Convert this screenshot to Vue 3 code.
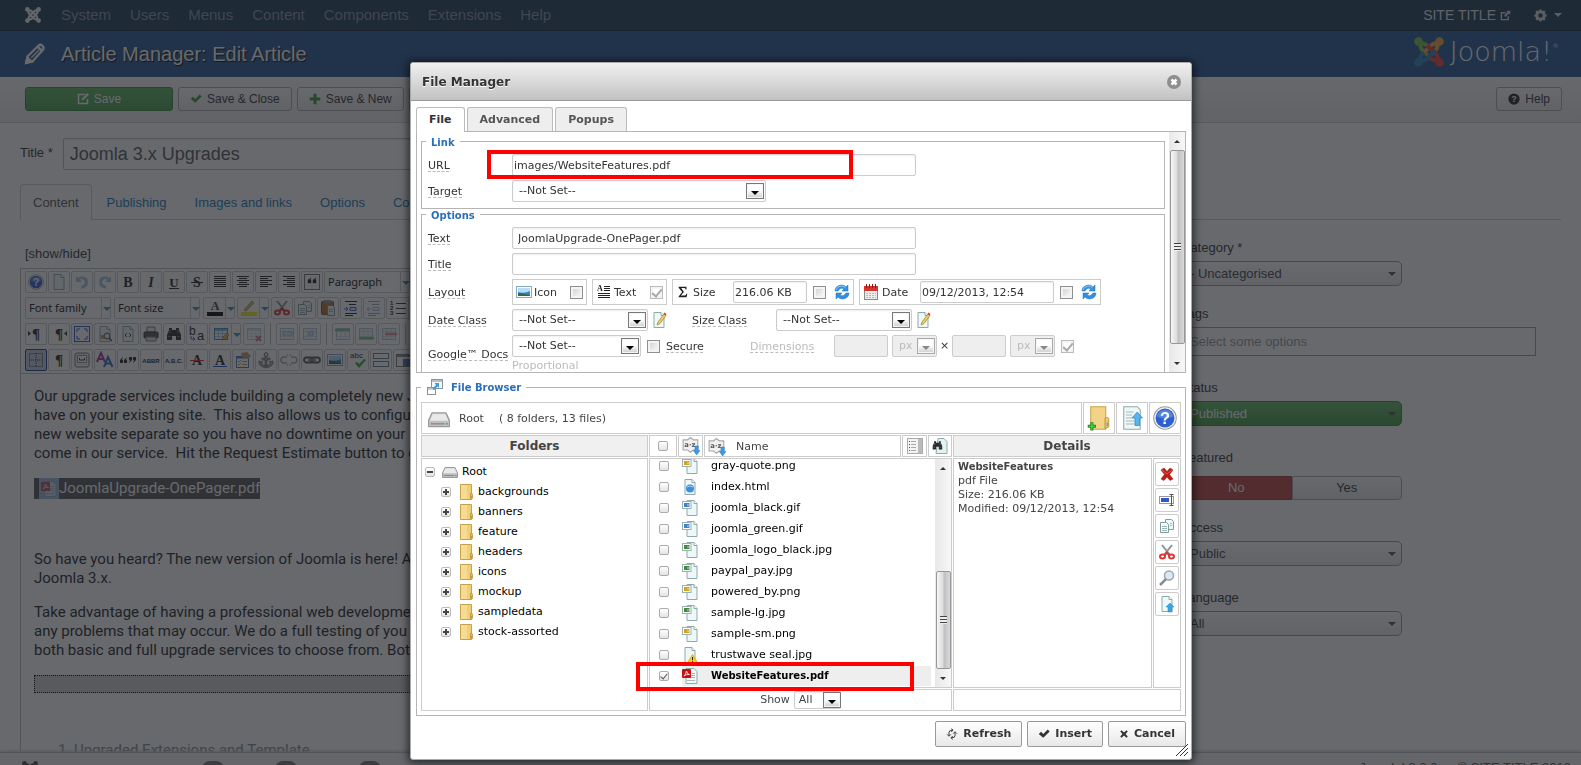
<script setup>
import { h, ref } from 'vue'

const doc = '<path d="M3 .5h7l3 3v12H3z" fill="#eef8f8" stroke="#8fa9ab"/><path d="M10 .5v3h3" fill="#fff" stroke="#8fa9ab"/>'
const picture = (c) =>
  '<path d="M5 .5h7l3 3v12H5z" fill="#eef8f8" stroke="#8fa9ab"/><path d="M12 .5v3h3" fill="#fff" stroke="#8fa9ab"/>' +
  `<rect x=".5" y="1.500" width="8.500" height="7" fill="#fff" stroke="#9ab0b3"/><rect x="2" y="3" width="5.500" height="4" fill="${c}"/><path d="M5 4h2.500v2H5z" fill="#fff" opacity=".35"/>`
const lines = (arr) => arr.map(([x, w], i) => `<path d="M${x} ${2.5 + i * 2}h${w}" stroke="#222"/>`).join('')
const tableBase =
  '<rect x="1.500" y="2.500" width="13" height="11" fill="#fff" stroke="#4d86a8"/><path d="M2 4h12" stroke="#7dbce0" stroke-width="2"/><path d="M2 7.500h12M2 10.500h12M5.500 5v8M9.500 5v8" stroke="#a9cfe2"/>'
const paleTable =
  '<rect x="1.500" y="2.500" width="13" height="11" fill="#f4f8fa" stroke="#b5c8d2"/><path d="M2 5.500h12M2 10.500h12M6 3v10M10 3v10" stroke="#d3e0e6"/>'
const joomla = (...colors) =>
  colors
    .map(
      (c, i) =>
        `<g transform="rotate(${i * 90} 8 8)"><path d="M3.500 3Q3 5.500 4.500 7L9 11.500M3 3.500Q5.500 3 7 4.500L7.800 5.300" fill="none" stroke="${c}" stroke-width="2.200"/><circle cx="2.400" cy="2.400" r="2.300" fill="${c}"/></g>`
    )
    .join('')
const scissors =
  '<path d="M3 1l8 10M13 1L5 11" stroke="#8c9498" stroke-width="2"/><g fill="none" stroke="#d83a3a" stroke-width="2"><ellipse cx="3.500" cy="12.500" rx="2.500" ry="2"/><ellipse cx="12.500" cy="12.500" rx="2.500" ry="2"/><path d="M5.500 11.500L8 8.500l2.500 3"/></g>'
const copy =
  '<path d="M6.500 1.500h6l2 2v8h-8z" fill="#eef8f8" stroke="#7f9c9f"/><path d="M1.500 4.500h6l2 2v8h-8z" fill="#f5fbfb" stroke="#7f9c9f"/><path d="M3 8.500h5M3 10.500h5M3 12.500h5M11 5.500h2M11 7.500h2" stroke="#9fb6b8"/>'
const binoc =
  '<path d="M3 2h3v2h4V2h3v2l2 5v5h-5v-4H6v4H1V9l2-5z" fill="#2a2a2a"/><path d="M2.500 10.500h2M11.500 10.500h2M4 4v3M12 4v3" stroke="#888"/>'
const glyph = (t, size = 13, extra = '') =>
  `<text x="8" y="13" text-anchor="middle" font-family="Liberation Serif, serif" font-weight="bold" font-size="${size}" fill="#222" ${extra}>${t}</text>`
const arrowUp = '<path d="M11 7l4 4h-2v5H9v-5H7z" fill="#3aa5e4" stroke="#2b86c4" stroke-width=".5"/>'

const icons = {
  joomla: joomla('#f2f2f2', '#f2f2f2', '#f2f2f2', '#f2f2f2'),
  joomlaColor: joomla('#7cc242', '#f9a541', '#ee4035', '#2c86bd'),
  pencil: '<path d="M1 15l1-5L11 1q1.500-1 3 .5t.5 3L6 14z" fill="none" stroke="#fff" stroke-width="1.800"/><path d="M1 15l1-4 3 3zM10 2l4 4" fill="#fff" stroke="#fff" stroke-width="2"/><path d="M5 11l6-6" stroke="#fff"/>',
  edit: '<path d="M11 2H2v12h12V8" fill="none" stroke="currentColor" stroke-width="2"/><path d="M6 10l1-3 7-7 2 2-7 7z" fill="currentColor"/>',
  check: '<path d="M1 8l3-3 3 3 6-6 2.500 2.500L7 13z" fill="currentColor"/>',
  plus: '<path d="M6 1h4v5h5v4h-5v5H6v-5H1V6h5z" fill="currentColor"/>',
  external: '<path d="M8 4H2v10h10V9" fill="none" stroke="#ddd" stroke-width="2"/><path d="M9 1h6v6l-2-2-5 5-2-2 5-5z" fill="#ddd"/>',
  gear: '<circle cx="8" cy="8" r="4.500" fill="none" stroke="#ddd" stroke-width="3.500"/><path d="M8 .5v3M8 12.500v3M.5 8h3M12.500 8h3M2.700 2.700l2 2M11.300 11.300l2 2M13.300 2.700l-2 2M4.700 11.300l-2 2" stroke="#ddd" stroke-width="3"/>',
  question: '<circle cx="8" cy="8" r="7.500" fill="#222"/><text x="8" y="12" text-anchor="middle" font-family="Liberation Sans, sans-serif" font-weight="bold" font-size="12" fill="#fff">?</text>',
  help: '<circle cx="8" cy="8" r="7.500" fill="#f4f4f4" stroke="#999" stroke-width=".7"/><circle cx="8" cy="8" r="6.300" fill="#2c5fd0"/><path d="M2.500 7a5.600 5.600 0 0 1 11 0q-5 2.500-11 0z" fill="#6f9bee" opacity=".6"/><text x="8" y="12" text-anchor="middle" font-family="Liberation Sans, sans-serif" font-weight="bold" font-size="11" fill="#fff">?</text>',
  doc,
  undo: '<path d="M2 2v6h6L5.500 5.500Q9 4 10.500 7T7 12v2.500q7-.5 7-6T9 2.500Q6 2 4 4z" fill="#a6c8e0"/>',
  redo: '<path d="M14 2v6H8l2.500-2.500Q7 4 5.500 7T9 12v2.500q-7-.5-7-6T7 2.500q3-.5 5 1.500z" fill="#a6c8e0"/>',
  bold: glyph('B', 14),
  italic: glyph('I', 14, 'font-style="italic"'),
  underline: glyph('U', 13) + '<path d="M3 14.500h10" stroke="#222"/>',
  strike: glyph('S', 14) + '<path d="M2 8.500h12" stroke="#222"/>',
  justify: lines([[2, 12], [2, 12], [2, 12], [2, 12], [2, 12], [2, 12]]),
  center: lines([[2, 12], [4, 8], [2, 12], [4, 8], [2, 12], [4, 8]]),
  left: lines([[2, 12], [2, 8], [2, 12], [2, 8], [2, 12], [2, 8]]),
  right: lines([[2, 12], [6, 8], [2, 12], [6, 8], [2, 12], [6, 8]]),
  quote: '<rect x=".5" y=".5" width="15" height="15" fill="#fff" stroke="#777"/><path d="M4 9V6l3-2-1 2h1v3zM9 9V6l3-2-1 2h1v3z" fill="#222" stroke="#222" stroke-width=".5"/>',
  fore: '<text x="8" y="10" text-anchor="middle" font-family="Liberation Serif, serif" font-weight="bold" font-size="12" fill="#333">A</text><path d="M0 12h16v4H0z" fill="#000"/>',
  hilite: '<path d="M3 10l8-9 2 2-8 8z" fill="#d7c24b" stroke="#666" stroke-width=".6"/><path d="M0 12h16v4H0z" fill="#eded10"/>',
  cut: scissors,
  copy,
  paste: '<rect x="1.500" y="1.500" width="12" height="13" rx="1" fill="#b5702c" stroke="#80501f"/><rect x="4" y="0" width="7" height="3" fill="#999"/><path d="M7.500 5.500h5l2 2v8h-7z" fill="#eef8f8" stroke="#7f9c9f"/><path d="M9 9.500h4M9 11.500h4" stroke="#9fb6b8"/>',
  indent: '<path d="M2 1.500h12M6 4.500h7M2 13.500h12M2 15.500h8" stroke="#222"/><path d="M7 7.500h6v3H7z" fill="#dce8ff" stroke="#3660d6"/><path d="M1 9h4M3 7l2 2-2 2" stroke="#3660d6" fill="none"/>',
  outdent: '<g opacity=".4"><path d="M2 1.500h12M6 4.500h7M2 13.500h12M2 15.500h8" stroke="#222"/><path d="M7 7.500h6v3H7z" fill="#dce8ff" stroke="#3660d6"/><path d="M1 9h4M3 7L1 9l2 2" stroke="#3660d6" fill="none"/></g>',
  numlist: '<path d="M6 3.500h10M6 8.500h10M6 13.500h10" stroke="#333"/><g font-family="Liberation Sans, sans-serif" font-weight="bold" font-size="6" fill="#222"><text x="0" y="5">1</text><text x="0" y="10">2</text><text x="0" y="15">3</text></g>',
  ltr: glyph('¶', 15) + '<path d="M0 5l3 2.500L0 10z" fill="#333"/>',
  rtl: glyph('¶', 15) + '<path d="M16 5l-3 2.500L16 10z" fill="#333"/>',
  full: '<rect x=".5" y=".5" width="15" height="15" fill="#fff" stroke="#2c57c8"/><path d="M3 6V3h3M10 3h3v3M13 10v3h-3M6 13H3v-3" stroke="#2c57c8" fill="none"/>',
  preview: doc + '<path d="M4 9h5v4H4z" fill="#d79b28"/><circle cx="10" cy="10" r="3" fill="#dcecf5" stroke="#555"/><path d="M12 12l3 3" stroke="#555" stroke-width="1.500"/>',
  source: doc + '<path d="M7 7L5 9l2 2M9 7l2 2-2 2" stroke="#444" fill="none"/>',
  print: '<path d="M4 1h8v5H4z" fill="#eee" stroke="#777"/><rect x="1" y="6" width="14" height="6" rx="1" fill="#555" stroke="#333"/><path d="M3 11h10v4H3z" fill="#ddd" stroke="#777"/>',
  search: binoc,
  replace: '<text x="0" y="9" font-family="Liberation Sans, sans-serif" font-size="12" fill="#222">b</text><text x="8" y="14" font-family="Liberation Sans, sans-serif" font-size="13" fill="#222">a</text><path d="M2 10v3h4M4 11l2 2-2 2" stroke="#2f6fd0" fill="none"/>',
  table: tableBase + '<path d="M9 14l1-3 4-4 2 2-4 4z" fill="#e6b93c" stroke="#915f1a" stroke-width=".6"/>',
  tabledel: '<g opacity=".35">' + tableBase + '</g><path d="M10 10l5 5M15 10l-5 5" stroke="#dc7777" stroke-width="2"/>',
  rowp: paleTable + '<rect x="4" y="6" width="9" height="3" fill="#e9f1ff" stroke="#9ab2e4"/>',
  cellp: paleTable + '<rect x="7" y="6" width="4" height="3" fill="#e9f1ff" stroke="#9ab2e4"/>',
  rowbefore: paleTable + '<path d="M0 4h15" stroke="#7dc283" stroke-width="2.500"/>',
  rowafter: paleTable + '<path d="M1 12h15" stroke="#7dc283" stroke-width="2.500"/>',
  rowdel: paleTable + '<path d="M4 8h12" stroke="#dd9292" stroke-width="2.500"/>',
  grid: '<path d="M1.500 1.500h13v13h-13zM8 1v14M1 8h14" fill="none" stroke="#333" stroke-dasharray="1 1"/>',
  pilcrow: glyph('¶', 15),
  nbsp: '<rect x="1" y="1" width="14" height="14" rx="2" fill="#eee" stroke="#777"/><rect x="3.500" y="3.500" width="9" height="7" fill="#fff" stroke="#999"/><path d="M5.500 6v2h5V6" fill="none" stroke="#333"/>',
  styles: '<g fill="none" stroke-width="2"><path d="M0 10L4 1l4 9M1.500 7h5" stroke="#a034a8"/><path d="M7 15l4-10 4.500 10M8.500 11.500h6" stroke="#2d6cc0"/></g>',
  cite: '<path d="M0 11V8l3-3-1 3h1v3zM4 11V8l3-3-1 3h1v3zM9 5h3v3l-3 3 1-3H9zM13 5h3v3l-3 3 1-3h-1z" fill="#222"/>',
  abbr: '<text x="8" y="11" text-anchor="middle" font-family="Liberation Sans, sans-serif" font-weight="bold" font-size="6" fill="#222">ABBR</text>',
  acro: '<text x="8" y="11" text-anchor="middle" font-family="Liberation Sans, sans-serif" font-weight="bold" font-size="6" fill="#222">A.B.C.</text>',
  del: glyph('A', 14) + '<path d="M1 8.500h14" stroke="#d22"/>',
  ins: glyph('A', 14) + '<path d="M1 14.500h14" stroke="#2352cc"/>',
  attribs: '<rect x="1.500" y="4.500" width="12" height="11" fill="#fff" stroke="#3b7ec6"/><path d="M1 5.500h12" stroke="#3b7ec6" stroke-width="2"/><path d="M3 9l1 1 2-2M3 12l1 1 2-2M7 9.500h5M7 12.500h5" stroke="#dd9a2a" fill="none"/><path d="M6 1l6-1 4 4-3 3-6-2z" fill="#c79a63"/>',
  anchor: '<circle cx="8" cy="2.500" r="1.800" fill="none" stroke="#555"/><path d="M7 4v10h2V4M4 6h8v2H4zM1 9l4 1-1.500 1q1 2 4.500 3 3.500-1 4.500-3L11 10l4-1v3q-2 3-7 4-5-1-7-4z" fill="#aaa" stroke="#555" stroke-width=".6"/>',
  unlink: '<g fill="none" stroke="#aaa" stroke-width="1.500"><path d="M6 5H3a3 3 0 0 0 0 6h3M10 5h3a3 3 0 0 1 0 6h-3"/><path d="M6 2l1 2M10 2L9 4M6 14l1-2M10 14l-1-2" stroke-width="1"/></g>',
  link: '<g fill="none" stroke="#555" stroke-width="1.800"><rect x="0" y="5.500" width="9" height="5" rx="2.500"/><rect x="7" y="5.500" width="9" height="5" rx="2.500"/><path d="M4 8h8" stroke="#888"/></g>',
  image: '<rect x=".5" y="2.500" width="15" height="11" fill="#fff" stroke="#86a9bd"/><path d="M2 4h12v8H2z" fill="#3787d6"/><path d="M2 4h12v3q-6 3-12 1z" fill="#b8dcf5"/><path d="M2 9q4 0 12 2v1H2z" fill="#316b48"/>',
  spell: '<text x="0" y="6" font-family="Liberation Sans, sans-serif" font-size="8" fill="#222">abc</text><path d="M5 11l2-1 2 2 5-5 2 1-7 8z" fill="#2fae36"/>',
  readmore: '<rect x=".5" y="1.500" width="15" height="5" fill="#fff" stroke="#5a7c90"/><rect x=".5" y="9.500" width="15" height="5" fill="#fff" stroke="#5a7c90"/>',
  pagebreak: '<rect x=".5" y="2.500" width="15" height="12" fill="#fff" stroke="#777"/><path d="M1 4h14" stroke="#888" stroke-width="2"/><path d="M7 7h8v7H7z" fill="#4a7fc6"/>',
  textIcon: '<text x="1" y="7" font-family="Liberation Serif, serif" font-weight="bold" font-size="8" fill="#222">A</text><path d="M8 2.500h6M8 4.500h6M8 6.500h6M2 9.500h12M2 11.500h12M2 13.500h12" stroke="#222"/>',
  sigma: '<path d="M3 2h9v3h-1q0-1.500-2-1.500H6L9 8l-3.500 4H10q1.500 0 2-2h1l-1 4H3v-1l4-5-4-5z" fill="#222"/>',
  refresh: '<path d="M1 7Q1 2 7 1q3-.3 5 2l2-2v6H8l2-2Q6 3 4 7zM15 9q0 5-6 6-3 .3-5-2l-2 2V9h6l-2 2q4 2 6-2z" fill="#2f8fe0" stroke="#2574bd" stroke-width=".5"/><path d="M2 6q1-3.500 5-4 3 0 4.500 2" stroke="#8cc8f4" fill="none"/>',
  calendar: '<rect x="1.500" y="2.500" width="13" height="13" fill="#eee" stroke="#888"/><path d="M1 2h14v5H1z" fill="#d8342c"/><path d="M3.500 0v4M6.500 0v4M9.500 0v4M12.500 0v4" stroke="#8c1c18"/><path d="M3 9.500h10M3 11.500h10M3 13.500h10" stroke="#a9bdbb" stroke-dasharray="2 1"/>',
  style: doc + '<path d="M6 13l1-3 6-8 2 1.500-6 8z" fill="#ecd24e" stroke="#8a6b22" stroke-width=".6"/><path d="M12.500 2l1-1.500 2 1.500-1 1.500z" fill="#d4433a"/>',
  browser: '<rect x="4.500" y=".5" width="11" height="9" fill="#f4f6f8" stroke="#8a9299"/><path d="M5 2h10" stroke="#b7bec4" stroke-width="2"/><rect x=".5" y="8.500" width="8" height="7" fill="#fff" stroke="#8a9299"/><path d="M1 10h7" stroke="#c8cdd1" stroke-width="2"/><path d="M12 4v5l-1.500-1.500L7 11l-1.500-1.500L9 6 7.500 4z" fill="#3f9be3"/>',
  drive: '<path d="M3 3.500h10l2.500 5.500v4.500H.5V9z" fill="#d5d5d5" stroke="#9a9a9a" stroke-linejoin="round"/><path d="M3.500 4.500h9L14.500 9h-13z" fill="#e9e9e9"/><path d="M1 9.500h14v3.500H1z" fill="#bdbdbd"/><path d="M2 11.500h10" stroke="#8c8c8c"/><path d="M13 11h1.500v1H13z" fill="#49b949"/>',
  folder: '<path d="M2.500.5h11v15h-11z" fill="#f1cf78" stroke="#c8a24a"/><path d="M3 1h6v14H3z" fill="#f7de98" opacity=".8"/><path d="M12.500 9.500q2-1 2 1v4l-2 1z" fill="#e6b957" stroke="#b58d38" stroke-width=".7"/><path d="M13.500 12v2" stroke="#58aee0"/>',
  newfolder: '<path d="M2.500.5h10v15h-10z" fill="#f3d486" stroke="#c8a24a" stroke-width=".7"/><path d="M12 8q2.500-1 2.500 1v5l-2.500 1z" fill="#f0c868" stroke="#b58d38" stroke-width=".6"/><path d="M13.500 11v2.500" stroke="#58aee0"/><path d="M.5 13.500h5.500M3.250 10.750v5.500" stroke="#1c8a1c" stroke-width="2"/><path d="M1 13.500h4.500M3.250 11.250v4.500" stroke="#4fd94f" stroke-width=".8"/>',
  upload: '<path d="M2.500.5h9l2 2v13h-11z" fill="#eef8f8" stroke="#8fa9ab" stroke-width=".7"/><path d="M4 4h5M4 6h4M4 8h4M4 10h6M4 12h6" stroke="#a5b8ba" stroke-width=".7"/><path d="M11.500 4l3.500 4h-2v5h-3V8H8z" fill="#56b6ee" stroke="#2b86c4" stroke-width=".5"/>',
  sort: '<path d="M1 2.500h4l2.500-2 2.500 2h4v9h-4l-2.500 2-2.500-2H1z" fill="#f1f1f1" stroke="#a8a8a8"/><text x="7" y="9" text-anchor="middle" font-family="DejaVu Sans, sans-serif" font-weight="bold" font-size="6" fill="#555">a·z</text><path d="M11.500 8h3v4H16l-3 4-3-4h1.500z" fill="#3b9be6" stroke="#2574bd" stroke-width=".4"/>',
  view: '<rect x=".5" y=".5" width="15" height="15" fill="#f3f3f3" stroke="#aaa"/><path d="M11 1h4v14h-4z" fill="#bbb"/><path d="M4 3.500h5M4 6.500h5M4 9.500h5M4 12.500h5" stroke="#aaa"/><path d="M2 3.500h1M2 6.500h1M2 9.500h1M2 12.500h1" stroke="#555"/>',
  find: '<path d="M6 .5h6l3 3v12H4z" fill="#e4f2f2" stroke="#8fa9ab"/><g transform="translate(0 2) scale(.68)">' + binoc + '</g>',
  png: picture('#d2a21a'),
  gif: picture('#3a84cc'),
  jpg: picture('#3f8a3c'),
  html: doc + '<circle cx="8" cy="9.500" r="4" fill="#3f8fdc"/><path d="M5 8q3-2 6 0" stroke="#a4d0f6" fill="none"/>',
  warn: doc + '<path d="M10.500 7.500l5 8h-10z" fill="#f5d21e" stroke="#c9a100" stroke-width=".7"/><path d="M10.500 10v3M10.500 13.800v1" stroke="#222"/>',
  pdf: '<path d="M4 .5h8l3 3v12H4z" fill="#eef8f8" stroke="#8fa9ab"/><path d="M7 7.500h6M7 9.500h6M10 5.500h3M5 12.500h8" stroke="#a5b8ba"/><rect x="0" y="1" width="9" height="9" rx="1" fill="#c90f0f"/><path d="M2 8q2-2 2.500-5Q5 6 7.500 6.500 4 6 2 8z" fill="none" stroke="#fff" stroke-width=".8"/>',
  remove: '<path d="M2 4l3-2 3 3.500L11 2l3 2-3.500 4.500L14 13l-3 1.500-3-3.500-3 3.500L2 13l3.500-4.500z" fill="#c41a12" stroke="#8f120c" stroke-width=".5"/><path d="M3 4l5 4 5-4" stroke="#ec6a60" fill="none" stroke-width=".8"/>',
  rename: '<rect x=".5" y="4.500" width="14" height="7" fill="#fff" stroke="#999"/><path d="M2 6h8v4H2z" fill="#2f55cf"/><path d="M10.500 2.500h4M10.500 13.500h4M12.500 3v10" stroke="#555"/>',
  zoom: '<circle cx="10" cy="5.500" r="4.500" fill="#dbe9f5" stroke="#9aa7b3" stroke-width="1.500"/><path d="M7 9l-6 6" stroke="#8c8c8c" stroke-width="2.500"/>',
  insert: doc + arrowUp,
  sync: '<path d="M4 10V6q0-3 4-3h1M7 1l2.500 2L7 5M12 6v4q0 3-4 3H7M9 11l-2.500 2L9 15M1.500 8.500L4 11l2.500-2.500M9.500 7.500L12 5l2.500 2.500" fill="none" stroke="#333" stroke-width="1.300"/>',
  cross: '<path d="M2 4l2-2 4 3.500L12 2l2 2-3.500 4L14 12l-2 2-4-3.500L4 14l-2-2 3.500-4z" fill="#333"/>',
  close: '<circle cx="8" cy="8" r="7" fill="#8e8e8e"/><path d="M5.500 5.500l5 5M10.500 5.500l-5 5" stroke="#fff" stroke-width="2.500"/>'
}

const Icon = (props) =>
  h('svg', { viewBox: '0 0 16 16', width: props.size || 16, height: props.size || 16, 'aria-hidden': 'true', innerHTML: icons[props.name] })
Icon.props = ['name', 'size']

const menus = ['System', 'Users', 'Menus', 'Content', 'Components', 'Extensions', 'Help']
const pageTabs = ['Content', 'Publishing', 'Images and links', 'Options', 'Configure Edit Screen']
const toolbar = [
  ['help', 'doc', 'undo', 'redo', 'bold', 'italic', 'underline', 'strike', 'justify', 'center', 'left', 'right', 'quote', '=Paragraph'],
  ['=Font family', '=Font size', '+fore', '+hilite', 'cut', 'copy', 'paste', 'indent', 'outdent', '+numlist'],
  ['ltr', 'rtl', 'full', 'preview', 'source', 'print', 'search', 'replace', '+table', 'tabledel', '|', 'rowp', 'cellp', '|', 'rowbefore', 'rowafter', 'rowdel', '|', 'rowp'],
  ['grid', 'pilcrow', 'nbsp', 'styles', 'cite', 'abbr', 'acro', 'del', 'ins', 'attribs', 'anchor', 'unlink', 'link', 'image', 'spell', 'readmore', 'pagebreak']
]
const folders = ['backgrounds', 'banners', 'feature', 'headers', 'icons', 'mockup', 'sampledata', 'stock-assorted']
const files = ref([
  ['gray-quote.png', 'png'], ['index.html', 'html'], ['joomla_black.gif', 'gif'], ['joomla_green.gif', 'gif'],
  ['joomla_logo_black.jpg', 'jpg'], ['paypal_pay.jpg', 'jpg'], ['powered_by.png', 'png'], ['sample-lg.jpg', 'jpg'],
  ['sample-sm.png', 'png'], ['trustwave seal.jpg', 'warn'], ['WebsiteFeatures.pdf', 'pdf']
].map(([name, icon]) => ({ name, icon, checked: icon === 'pdf' })))
const actions = [['remove', 'Delete'], ['rename', 'Rename'], ['copy', 'Copy'], ['cut', 'Cut'], ['zoom', 'View'], ['insert', 'Insert']]
</script>

<template>
  <div class="page">
    <nav class="nav">
      <Icon name="joomla" class="nav-logo" />
      <a v-for="m in menus" :key="m" href="#">{{ m }}</a>
      <span class="spacer"></span>
      <a href="#" class="site">SITE TITLE <Icon name="external" size="11" /></a>
      <button type="button" class="gear" aria-label="Settings"><Icon name="gear" size="13" /><i class="caret"></i></button>
    </nav>
    <header class="header">
      <Icon name="pencil" size="20" />
      <h1>Article Manager: Edit Article</h1>
      <div class="brand"><Icon name="joomlaColor" size="30" /><span>Joomla!</span><sup>®</sup></div>
    </header>
    <div class="subhead">
      <button type="button" class="btn save"><Icon name="edit" size="12" />Save</button>
      <button type="button" class="btn"><Icon name="check" size="12" class="green" />Save &amp; Close</button>
      <button type="button" class="btn"><Icon name="plus" size="12" class="green" />Save &amp; New</button>
      <button type="button" class="btn">Save as Copy</button>
      <span class="spacer"></span>
      <button type="button" class="btn"><Icon name="question" size="12" />Help</button>
    </div>

    <main class="content">
      <div class="title-row">
        <label for="title">Title *</label>
        <input id="title" type="text" value="Joomla 3.x Upgrades" />
      </div>
      <div class="page-tabs">
        <a v-for="(t, i) in pageTabs" :key="t" href="#" :class="{ on: i === 0 }">{{ t }}</a>
      </div>
      <div class="columns">
        <section class="main-col">
          <a href="#" class="showhide">[show/hide]</a>
          <div class="editor">
            <div class="toolbar">
              <div v-for="(row, r) in toolbar" :key="r" class="tb-row">
                <template v-for="(b, i) in row" :key="i">
                  <i v-if="b === '|'" class="sep"></i>
                  <button v-else-if="b[0] === '='" type="button" class="tb combo"><span>{{ b.slice(1) }}</span><i class="split"></i></button>
                  <button v-else-if="b[0] === '+'" type="button" class="tb wide" :aria-label="b.slice(1)"><Icon :name="b.slice(1)" /><i class="split"></i></button>
                  <button v-else type="button" class="tb" :class="{ active: b === 'grid' }" :aria-label="b"><Icon :name="b" /></button>
                </template>
              </div>
            </div>
            <div class="doc">
              <p>Our upgrade services include building a completely new Jo<br />have on your existing site.&nbsp; This also allows us to configur<br />new website separate so you have no downtime on your<br />come in our service.&nbsp; Hit the Request Estimate button to g</p>
              <p class="selected"><span class="pdf-mark"><Icon name="pdf" /></span>JoomlaUpgrade-OnePager.pdf</p>
              <p class="blank">&nbsp;</p>
              <p>So have you heard? The new version of Joomla is here! A<br />Joomla 3.x.</p>
              <p>Take advantage of having a professional web developmen<br />any problems that may occur. We do a full testing of you<br />both basic and full upgrade services to choose from. Both</p>
              <div class="dotted"></div>
              <ol><li>Upgraded Extensions and Template</li></ol>
            </div>
          </div>
        </section>
        <aside class="side">
          <div class="group tight"><label for="cat">Category *</label><div class="pick"><select id="cat"><option>- Uncategorised</option></select><i class="caret"></i></div></div>
          <div class="group"><label for="tags">Tags</label><input id="tags" type="text" placeholder="Select some options" /></div>
          <div class="group"><label for="status">Status</label><div class="pick pub"><select id="status"><option>Published</option></select><i class="caret"></i></div></div>
          <div class="group tight"><span class="lbl">Featured</span><div class="toggle"><button type="button" class="no">No</button><button type="button">Yes</button></div></div>
          <div class="group"><label for="access">Access</label><div class="pick"><select id="access"><option>Public</option></select><i class="caret"></i></div></div>
          <div class="group"><label for="lang">Language</label><div class="pick"><select id="lang"><option>All</option></select><i class="caret"></i></div></div>
        </aside>
      </div>
    </main>

    <footer class="status">
      <Icon name="joomla" class="dark" />
      <i class="pill"></i><i class="pill"></i><i class="pill last"></i>
      <span class="spacer"></span>
      <span>Joomla! 3.2.0 — © SITE TITLE 2013</span>
    </footer>
  </div>

  <div class="overlay">
    <section class="modal" role="dialog" aria-label="File Manager">
      <header class="modal-head">
        <h2>File Manager</h2>
        <button type="button" aria-label="Close"><Icon name="close" size="16" /></button>
      </header>
      <div class="modal-body">
        <div class="tabs" role="tablist">
          <button type="button" role="tab" class="on">File</button>
          <button type="button" role="tab">Advanced</button>
          <button type="button" role="tab">Popups</button>
        </div>
        <div class="panel">
          <div class="panel-main">
            <fieldset>
              <legend>Link</legend>
              <div class="row">
                <label for="url"><u>URL</u></label>
                <input id="url" type="text" class="long near" value="images/WebsiteFeatures.pdf" />
                <div class="mark url-mark"></div>
              </div>
              <div class="row">
                <label for="target"><u>Target</u></label>
                <div class="sel w254"><select id="target"><option>--Not Set--</option></select><i></i></div>
              </div>
            </fieldset>
            <fieldset class="second">
              <legend>Options</legend>
              <div class="row"><label for="text"><u>Text</u></label><input id="text" type="text" class="long" value="JoomlaUpgrade-OnePager.pdf" /></div>
              <div class="row"><label for="ttl"><u>Title</u></label><input id="ttl" type="text" class="long" value="" /></div>
              <div class="row">
                <span class="name"><u>Layout</u></span>
                <div class="boxes">
                  <div class="box w75"><Icon name="image" /><label for="l-icon">Icon</label><input id="l-icon" type="checkbox" class="end" /></div>
                  <div class="box w75"><Icon name="textIcon" /><label for="l-text">Text</label><input id="l-text" type="checkbox" class="end" checked disabled /></div>
                  <div class="box w182"><Icon name="sigma" size="14" /><label for="l-size">Size</label><input id="l-size" type="text" class="near size" value="216.06 KB" /><input type="checkbox" aria-label="Show size" /><button type="button" class="plain" aria-label="Refresh size"><Icon name="refresh" /></button></div>
                  <div class="box w242"><Icon name="calendar" /><label for="l-date">Date</label><input id="l-date" type="text" class="near date" value="09/12/2013, 12:54" /><input type="checkbox" aria-label="Show date" /><button type="button" class="plain" aria-label="Refresh date"><Icon name="refresh" /></button></div>
                </div>
              </div>
              <div class="row">
                <label for="dc"><u>Date Class</u></label>
                <div class="sel w136"><select id="dc"><option>--Not Set--</option></select><i></i></div>
                <button type="button" class="plain edit" aria-label="Edit date class"><Icon name="style" /></button>
                <label for="sc" class="second-label"><u>Size Class</u></label>
                <div class="sel w136"><select id="sc"><option>--Not Set--</option></select><i></i></div>
                <button type="button" class="plain edit" aria-label="Edit size class"><Icon name="style" /></button>
              </div>
              <div class="row docs">
                <label for="gd" class="low"><u>Google™ Docs</u></label>
                <div class="docs-fields">
                  <div class="line">
                    <div class="sel w129"><select id="gd"><option>--Not Set--</option></select><i></i></div>
                    <input id="sec" type="checkbox" /><label for="sec" class="secure"><u>Secure</u></label>
                    <label for="dw" class="dims"><u>Dimensions</u></label>
                    <input id="dw" type="text" class="dim" disabled />
                    <div class="sel off"><select disabled aria-label="Width unit"><option>px</option></select><i></i></div>
                    <span class="times">×</span>
                    <input type="text" class="dim" disabled aria-label="Height" />
                    <div class="sel off"><select disabled aria-label="Height unit"><option>px</option></select><i></i></div>
                    <input id="prop" type="checkbox" checked disabled />
                  </div>
                  <label for="prop" class="prop">Proportional</label>
                </div>
              </div>
            </fieldset>
          </div>
          <div class="scroll"><i class="up"></i><div class="thumb top"><b></b></div><i class="down"></i></div>
        </div>

        <fieldset class="browser">
          <legend><Icon name="browser" /><span>File Browser</span></legend>
          <div class="path">
            <div class="cell crumbs"><Icon name="drive" size="22" /><span>Root</span><span>( 8 folders, 13 files)</span></div>
            <button type="button" class="cell sq" aria-label="New folder"><Icon name="newfolder" size="24" /></button>
            <button type="button" class="cell sq" aria-label="Upload"><Icon name="upload" size="24" /></button>
            <button type="button" class="cell sq" aria-label="Help"><Icon name="help" size="24" /></button>
          </div>
          <div class="grid">
            <div class="col">
              <div class="cell head">Folders</div>
              <div class="cell tree">
                <div class="node"><i class="tg minus"></i><Icon name="drive" /><a href="#">Root</a></div>
                <div v-for="f in folders" :key="f" class="node child"><i class="tg"></i><Icon name="folder" /><a href="#">{{ f }}</a></div>
              </div>
            </div>
            <div class="col mid">
              <div class="heads">
                <div class="cell c28"><input type="checkbox" class="sm" aria-label="Select all" /></div>
                <button type="button" class="cell c25" aria-label="Sort by type"><Icon name="sort" size="18" /></button>
                <button type="button" class="cell namehead"><Icon name="sort" size="18" /><span>Name</span></button>
                <button type="button" class="cell c25" aria-label="View"><Icon name="view" /></button>
                <button type="button" class="cell c24" aria-label="Search"><Icon name="find" /></button>
              </div>
              <div class="cell list">
                <div class="items">
                  <label v-for="f in files" :key="f.name" class="file" :class="{ on: f.checked }">
                    <input v-model="f.checked" type="checkbox" class="sm" /><span class="fname"><Icon :name="f.icon" />{{ f.name }}</span>
                  </label>
                </div>
                <div class="scroll"><i class="up"></i><div class="track"></div><div class="thumb"><b></b></div><i class="down"></i></div>
                <div class="mark file-mark"></div>
              </div>
              <div class="cell show"><label for="show">Show</label><div class="sel mini"><select id="show"><option>All</option></select><i></i></div></div>
            </div>
            <div class="col">
              <div class="cell head">Details</div>
              <div class="info">
                <div class="cell text"><strong>WebsiteFeatures</strong><span>pdf File</span><span>Size: 216.06 KB</span><span>Modified: 09/12/2013, 12:54</span></div>
                <div class="cell acts"><button v-for="a in actions" :key="a[0]" type="button" :aria-label="a[1]"><Icon :name="a[0]" /></button></div>
              </div>
              <div class="cell foot"></div>
            </div>
          </div>
        </fieldset>
        <div class="buttons">
          <button type="button"><Icon name="sync" size="12" />Refresh</button>
          <button type="button"><Icon name="check" size="12" />Insert</button>
          <button type="button"><Icon name="cross" size="10" />Cancel</button>
        </div>
      </div>
      <svg class="grip" width="12" height="12" viewBox="0 0 12 12" aria-hidden="true"><path d="M0 12L12 0M4 12l8-8M8 12l4-4" stroke="#333" /></svg>
    </section>
  </div>
</template>

<style>
html, body { overflow: hidden; }
</style>

<style scoped>
* { box-sizing: border-box; }
svg { display: block; flex: none; overflow: visible; }
button, input, select { font: inherit; color: inherit; margin: 0; }
button { padding: 0; border: 0; background: none; }
a { color: inherit; text-decoration: none; }
.spacer { flex: 1; }

.page { position: relative; height: 100vh; overflow: hidden; background: #fff; color: #333; font: 13px/18px "Liberation Sans", Arial, sans-serif; }
.nav { display: flex; align-items: center; height: 31px; padding: 0 19px 0 25px; background: #1f3b57; border-bottom: 1px solid #10253c; color: #8493a3; font-size: 15px; }
.nav a { margin-right: 19px; }
.nav-logo { margin-right: 20px; }
.nav .site { display: flex; align-items: center; gap: 4px; color: #e4e8ec; font-size: 14px; margin-right: 23px; }
.gear { display: flex; align-items: center; gap: 7px; }
.caret { border: 4px solid transparent; border-top-color: #555; border-bottom: 0; }
.gear .caret { border-top-color: #ddd; }
.header { display: flex; align-items: center; height: 46px; padding: 0 22px 0 25px; background: #265792; color: #fff; }
.header h1 { flex: 1; margin: 0 0 0 16px; font-size: 20px; font-weight: 400; line-height: 24px; text-shadow: 1px 1px 1px #000; }
.brand { display: flex; align-items: center; color: #fff; font: 27px/30px "DejaVu Sans", sans-serif; font-weight: 200; margin-top: -4px; }
.brand svg { margin-right: 6px; }
.brand sup { font-size: 7px; line-height: 10px; align-self: flex-start; margin-top: 4px; }
.subhead { display: flex; align-items: flex-start; gap: 5px; height: 46px; padding: 10px 19px 0 25px; background: linear-gradient(#fbfbfb, #ececec); border-bottom: 1px solid #cfcfcf; }
.btn { display: flex; align-items: center; justify-content: center; gap: 5px; height: 24px; padding: 0 11px; border: 1px solid #aaa; border-radius: 3px; background: linear-gradient(#fff, #e9e9e9); font-size: 12px; white-space: nowrap; }
.save { width: 148px; border-color: #3a8a3a; background: linear-gradient(#5bb75b, #4aa04a); color: #fff; }
.green { color: #3b9a3b; }

.content { padding: 15px 20px 0; }
.title-row { display: flex; align-items: flex-start; gap: 10px; }
.title-row label { line-height: 30px; }
.title-row input { width: 500px; border-radius: 3px; background: #fff; color: #555; font-size: 18px; }
.page-tabs { display: flex; gap: 2px; margin-top: 14px; border-bottom: 1px solid #ccc; color: #1478b8; }
.page-tabs a { padding: 9px 12px 7px; border: 1px solid transparent; border-bottom: 0; }
.page-tabs .on { margin-bottom: -1px; padding-bottom: 8px; border-color: #ccc; border-radius: 4px 4px 0 0; background: #fff; color: #555; }
.columns { display: flex; gap: 30px; align-items: flex-start; }
.main-col { flex: 1; min-width: 0; }
.showhide { display: block; margin: 25px 5px 5px; }
.side { width: 380px; padding-top: 18px; }
.group { display: flex; flex-direction: column; gap: 3px; margin-bottom: 22px; line-height: 20px; }
.group.tight { margin-bottom: 18px; }
.pick { position: relative; width: 221px; }
.pick select { appearance: none; display: block; width: 100%; height: 25px; padding: 0 8px; border: 1px solid #999; border-radius: 5px; background: linear-gradient(#fff, #ececec); color: #444; }
.pick .caret { position: absolute; right: 6px; top: 11px; }
.pick.pub select { border-color: #3a8a3a; background: linear-gradient(#62bb62, #459a45); color: #fff; }
.side input { width: 355px; background: #fff; }
.side input::placeholder { color: #999; }
.toggle { display: flex; width: 221px; margin-top: 5px; }
.toggle button { flex: 1; height: 24px; border: 1px solid #aaa; border-radius: 0 4px 4px 0; background: linear-gradient(#fff, #e9e9e9); }
.toggle .no { border-color: #a33; border-radius: 4px 0 0 4px; background: #be413d; color: #fff; }

.editor { height: 520px; border: 1px solid #bbb; }
.toolbar { padding: 2px 4px; border-bottom: 1px solid #bbb; }
.tb-row { display: flex; gap: 1px; margin-bottom: 4px; overflow: hidden; }
.tb-row:last-child { margin-bottom: 0; }
.tb { flex: none; display: flex; align-items: center; justify-content: center; width: 22px; height: 22px; border: 1px solid #ccc; border-radius: 2px; background: #fdfdfd; }
.tb.active { border-color: #1f3d8c; background: #c2cbe0; }
.combo { justify-content: space-between; width: 86px; margin-right: 2px; padding-left: 3px; color: #111; font: 11px/16px "Noto Sans", sans-serif; }
.wide { width: 32px; margin-right: 1px; justify-content: space-between; padding-left: 3px; }
.split { display: block; position: relative; width: 9px; height: 20px; border-left: 1px solid #ccc; }
.split::after { content: ""; position: absolute; left: 1px; top: 9px; border: 4px solid transparent; border-top-color: #3c8fc0; border-bottom: 0; }
.sep { width: 1px; height: 22px; margin: 0 4px; background: #bbb; }
.doc { padding: 13px 13px 0; color: #222; font: 15px/19px Roboto, Tahoma, sans-serif; white-space: nowrap; }
.doc p { margin: 0 0 15px; }
.doc .selected { display: flex; align-items: center; width: max-content; height: 21px; padding-left: 5px; background: #555; color: #fff; }
.pdf-mark { display: flex; align-items: center; width: 20px; height: 21px; padding-left: 2px; background: #9db6dd; }
.pdf-mark svg { opacity: .6; }
.doc .blank { height: 21px; }
.dotted { width: 600px; height: 18px; border: 1px dotted #000; background: #d0d0d0; }
.doc ol { margin: 48px 0 0; padding-left: 40px; color: #888; }

.status { position: absolute; left: 0; right: 0; bottom: 0; display: flex; align-items: flex-start; height: 13px; overflow: hidden; padding: 8px 10px 0 22px; background: #f4f4f4; border-top: 1px solid #bbb; color: #555; box-shadow: 0 -1px 3px #ccc; }
.status svg { filter: brightness(.3); margin-right: 164px; }
.status span { line-height: 14px; }
.pill { width: 22px; height: 18px; margin-right: 51px; border-radius: 8px; background: #777; }
.pill:nth-of-type(2) { margin-right: 62px; }

.overlay { position: fixed; inset: 0; display: flex; align-items: flex-start; justify-content: center; padding: 62px 0 0 21px; background: rgba(31, 34, 40, .68); font: 11px/14px "DejaVu Sans", Verdana, sans-serif; color: #333; }
.modal { position: relative; width: 782px; border: 1px solid #aaa; border-radius: 3px; background: #fff; box-shadow: 0 1px 9px 2px rgba(0, 0, 0, .6); }
.modal-head { display: flex; align-items: center; justify-content: space-between; height: 38px; padding: 0 9px 0 11px; border-bottom: 1px solid #999; border-radius: 3px 3px 0 0; background: linear-gradient(#f0f0f0, #c2c2c2); }
.modal-head h2 { margin: 0; font-size: 12px; line-height: 16px; text-shadow: 0 1px #fff; }
.modal-body { padding: 6px 5px 12px; }
.tabs { display: flex; gap: 2px; }
.tabs button { height: 24px; padding: 0 12px; border: 1px solid #bbb; border-bottom: 0; border-radius: 3px 3px 0 0; background: #eee; color: #555; font-weight: 700; }
.tabs .on { position: relative; height: 25px; margin-bottom: -1px; background: #fff; color: #333; }
.panel { display: flex; height: 242px; border: 1px solid #b5b5b5; overflow: hidden; }
.panel-main { flex: 1; min-width: 0; padding: 1px 4px 0; }
fieldset { min-width: 0; margin: 0; padding: 5px 6px 2px; border: 1px solid #b5b5b5; }
.second { margin-top: -3px; height: 200px; }
legend { margin-left: -2px; padding: 3px 5px 0; color: #2b6fb8; font-size: 10px; line-height: 13px; font-weight: 700; }
.row { position: relative; display: flex; align-items: center; margin-bottom: 4px; }
.row > label, .name { padding-top: 1px; }
.row > label:first-child, .name { width: 84px; white-space: nowrap; }
.row u { text-decoration: underline dashed #bbb 1px; text-underline-offset: 2px; }
input[type="text"], .sel select { height: 22px; border: 1px solid #ccc; border-radius: 2px; background: #fff; box-shadow: inset 0 1px 2px #eee; }
input[type="text"] { padding: 0 5px; }
.side input[type="text"] { height: 29px; padding: 0 8px; border-color: #999; border-radius: 0; box-shadow: none; }
.title-row input[type="text"] { height: 32px; padding: 0 6px; border-color: #bbb; }
.long { width: 404px; }
.modal input.near { padding: 0 1px; }
.sel { position: relative; }
.sel select { appearance: none; display: block; width: 100%; padding: 0 6px; }
.sel i { position: absolute; right: 2px; top: 3px; width: 18px; height: 16px; border: 1px solid #777; background: linear-gradient(#fff 45%, #ccc); box-shadow: inset 0 0 0 1px #f5f5f5; pointer-events: none; }
.sel i::after { content: ""; position: absolute; left: 4px; top: 7px; border: 4px solid transparent; border-top-color: #000; border-bottom: 0; }
.w254 { width: 254px; }
.w136 { width: 136px; }
.w129 { width: 129px; }
input[type="checkbox"] { appearance: none; position: relative; flex: none; width: 13px; height: 13px; border: 1px solid #8e8f8f; background: linear-gradient(135deg, #ccc, #fff); box-shadow: inset 0 0 0 2px #f4f4f4; }
input[type="checkbox"]:checked::after { content: ""; position: absolute; left: 3px; top: 0; width: 4px; height: 8px; border: solid #555; border-width: 0 2px 2px 0; transform: rotate(40deg); }
input[type="checkbox"]:disabled { border-color: #bbb; background: #fff; }
input[type="checkbox"]:disabled::after { border-color: #aaa; }
.boxes { display: flex; gap: 5px; }
.box { display: flex; align-items: center; gap: 2px; height: 26px; padding: 0 3px; border: 1px solid #ccc; }
.box label { padding-top: 1px; }
.box .end { margin-left: auto; }
.w75 { width: 75px; }
.w182 { width: 182px; }
.w242 { width: 242px; }
.w182 .size { margin-left: 4px; }
.w182 label { width: 38px; margin-left: 1px; }
.w242 label { width: 37px; margin-left: 1px; }
.box input[type="checkbox"]:not(.end) { margin: 0 6px 0 4px; }
.size { width: 74px; }
.date { width: 134px; }
.edit { margin-left: 3px; }
.second-label { width: 84px; margin-left: 25px; }
.docs { align-items: flex-start; }
.row > .low:first-child { padding-top: 13px; }
.line { display: flex; align-items: center; }
.line label { padding-top: 1px; }
.line input[type="checkbox"] { margin-left: 6px; }
.secure { width: 84px; margin-left: 6px; }
.dims { width: 84px; color: #bbb; }
.dim { width: 54px; }
.modal input.dim:disabled, .off select:disabled { background: #eee; opacity: 1; }
.off { width: 45px; margin-left: 4px; color: #bbb; }
.off i { border-color: #aaa; }
.off i::after { border-top-color: #888; }
.times { width: 15px; text-align: center; }
.prop { display: block; margin-top: 1px; color: #bbb; line-height: 15px; }

.scroll { display: flex; flex-direction: column; align-items: center; width: 16px; background: linear-gradient(90deg, #e8e8e8, #f7f7f7); }
.scroll .up, .scroll .down { flex: none; width: 16px; height: 18px; position: relative; }
.scroll .up::after, .scroll .down::after { content: ""; position: absolute; left: 5px; top: 8px; border: 3px solid transparent; border-bottom-color: #333; border-top: 0; }
.scroll .down { height: 28px; }
.scroll .down::after { top: 18px; border-top: 3px solid #333; border-bottom: 0; }
.thumb { display: flex; align-items: center; justify-content: center; width: 15px; flex: 1; border: 1px solid #979797; border-radius: 2px; background: linear-gradient(90deg, #f6f6f6, #dcdcdc 45%, #c0c0c4 55%, #dadada); }
.thumb b { width: 7px; height: 8px; background: repeating-linear-gradient(#444 0 1px, #eee 1px 3px); }

.browser { margin-top: 6px; padding: 7px 4px 4px; }
.browser legend { display: flex; align-items: center; gap: 8px; margin-left: 0; padding: 0 5px 0 6px; }
.cell { border: 1px solid #ccc; background: #fff; }
.path { display: flex; gap: 1px; margin-bottom: 1px; color: #444; }
.crumbs { flex: 1; display: flex; align-items: center; height: 32px; padding: 1px 0 0 6px; }
.crumbs span { margin-left: 9px; }
.crumbs span + span { margin-left: 15px; }
.sq { display: flex; align-items: center; justify-content: center; width: 32px; height: 32px; }
.grid { display: grid; grid-template-columns: 227px 1fr 228px; gap: 1px; }
.col { display: flex; flex-direction: column; gap: 1px; min-width: 0; }
.head { height: 22px; background: #f0f0f0; color: #444; font-size: 12px; font-weight: 700; line-height: 20px; text-align: center; }
.tree { flex: 1; padding: 3px; color: #000; }
.node { display: flex; align-items: center; height: 20px; }
.node svg { margin: 0 4px 0 7px; }
.child { padding-left: 16px; }
.tg { position: relative; width: 10px; height: 10px; border: 1px solid #bbb; border-radius: 2px; background: linear-gradient(#fff, #e4e4e4); }
.tg::before, .tg::after { content: ""; position: absolute; left: 1px; top: 3px; width: 6px; height: 2px; background: #444; }
.tg::after { left: 3px; top: 1px; width: 2px; height: 6px; }
.minus::after { display: none; }
.heads { display: flex; gap: 1px; height: 22px; }
.heads > * { display: flex; align-items: center; justify-content: center; }
.c28 { width: 28px; }
.c25 { width: 25px; }
.c24 { width: 24px; }
.heads .namehead { flex: 1; justify-content: flex-start; gap: 10px; padding: 1px 0 0 3px; color: #444; }
input.sm[type="checkbox"] { width: 10px; height: 10px; border-color: #aaa; border-radius: 2px; background: linear-gradient(#fff, #e4e4e4); box-shadow: none; }
input.sm[type="checkbox"]:checked::after { left: 2px; top: 0; width: 3px; height: 6px; border-width: 0 1px 1px 0; }
.list { position: relative; display: flex; height: 230px; }
.items { flex: 1; display: flex; flex-direction: column; justify-content: flex-end; height: 228px; overflow: hidden; padding: 0 4px 1px 9px; }
.file { display: flex; align-items: center; gap: 13px; flex: none; height: 21px; color: #000; }
.fname { flex: 1; display: flex; align-items: center; gap: 13px; height: 20px; }
.on .fname { background: #eee; font-size: 10px; font-weight: 700; }
.list .track { flex: 0 0 94px; }
.list .down { height: 18px; }
.list .down::after { top: 8px; }
.list .thumb { flex: 1; }
.show { display: flex; align-items: center; justify-content: center; gap: 4px; height: 22px; color: #444; }
.mini { width: 47px; }
.mini select { height: 18px; padding: 0 4px; }
.mini i { right: 0; top: 1px; }
.info { display: flex; gap: 1px; height: 230px; }
.text { flex: 1; display: flex; flex-direction: column; padding: 1px 4px; color: #444; }
.text strong { font-size: 10px; }
.acts { display: flex; flex-direction: column; gap: 2px; width: 28px; padding: 3px 1px; }
.acts button { display: flex; align-items: center; justify-content: center; width: 24px; height: 24px; border: 1px solid #ccc; border-radius: 2px; }
.foot { height: 22px; }
.buttons { display: flex; justify-content: flex-end; gap: 5px; margin-top: 5px; }
.buttons button { display: flex; align-items: center; justify-content: center; gap: 5px; height: 26px; padding: 0 10px; border: 1px solid #999; border-radius: 2px; background: linear-gradient(#fff, #e8e8e8); font-weight: 700; font-size: 11px; }
.grip { position: absolute; right: 3px; bottom: 3px; }
.mark { position: absolute; border: 4px solid #f00; pointer-events: none; }
.url-mark { left: 59px; top: -4px; width: 366px; height: 29px; }
.file-mark { left: -14px; bottom: -4px; width: 278px; height: 29px; }
</style>
